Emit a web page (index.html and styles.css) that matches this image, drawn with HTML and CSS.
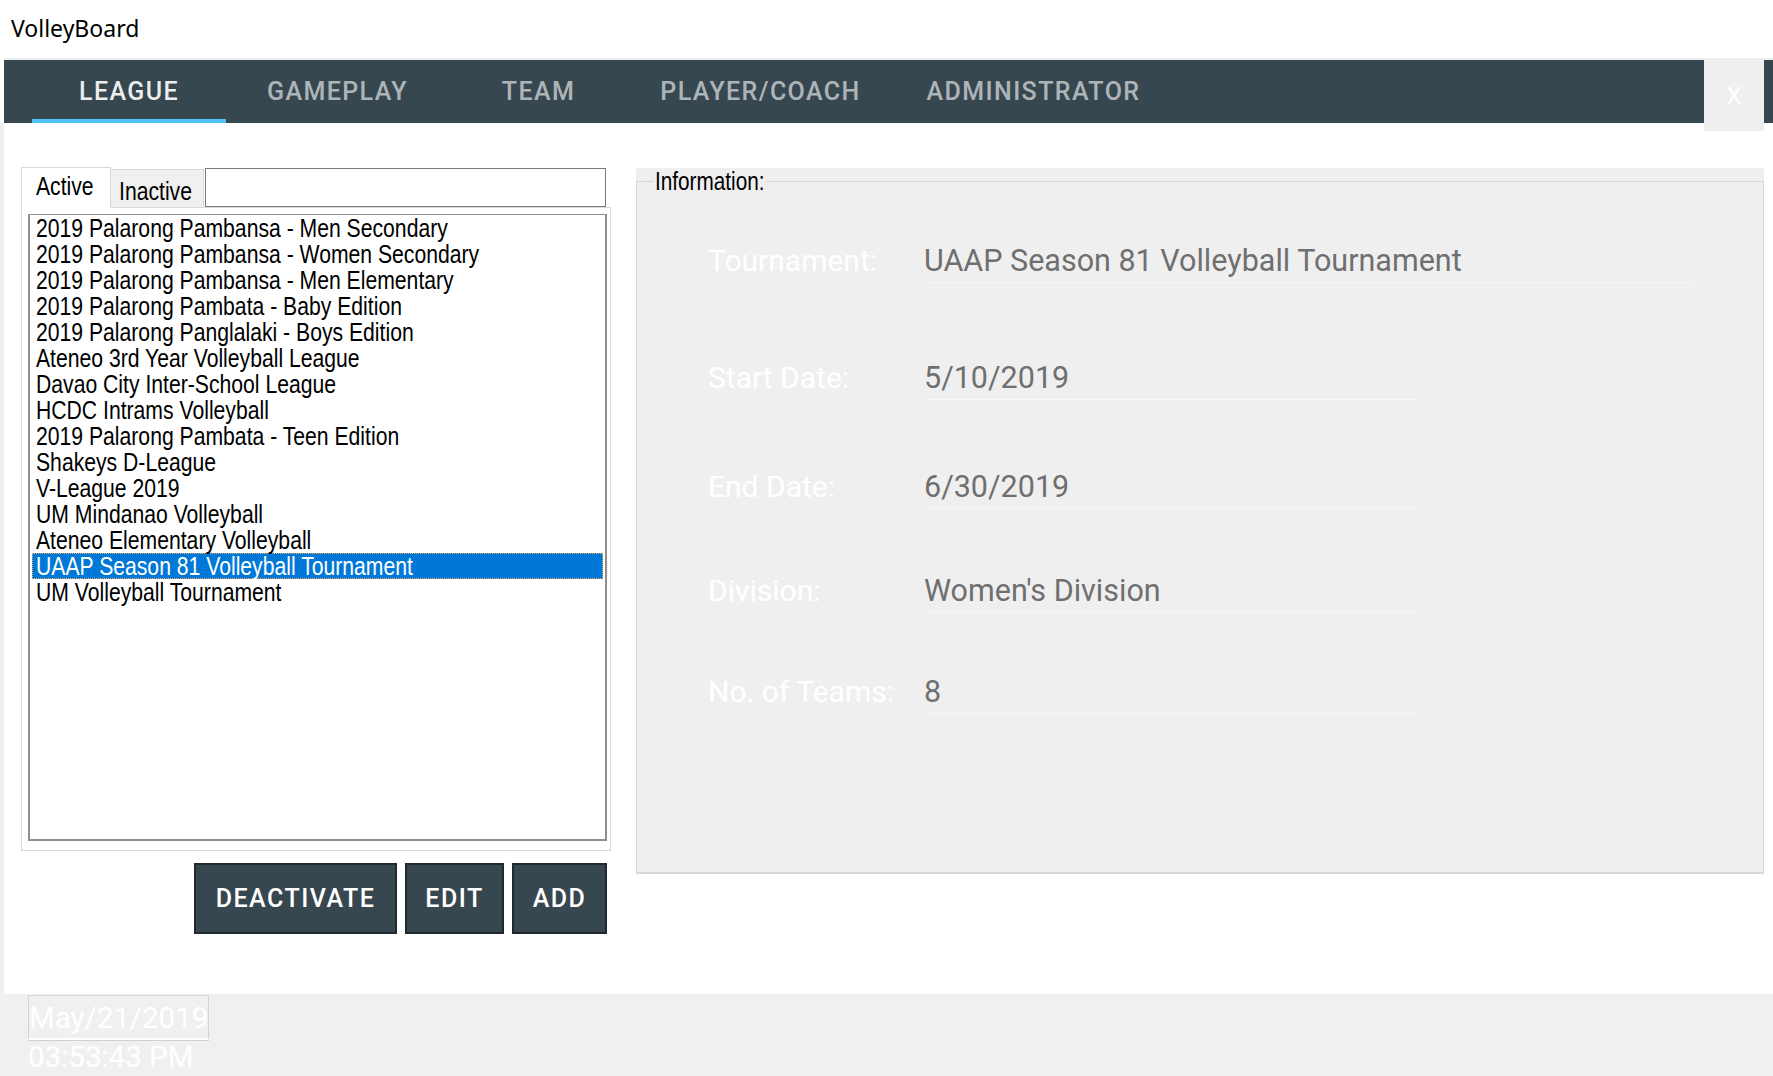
FILE: index.html
```html
<!DOCTYPE html>
<html lang="en">
<head>
<meta charset="utf-8">
<title>VolleyBoard</title>
<link rel="stylesheet" href="styles.css">
</head>
<body>
<div class="app">
  <header class="titlebar">VolleyBoard</header>
  <nav class="nav">
    <a class="tab tab-league active">LEAGUE</a>
    <a class="tab tab-gameplay">GAMEPLAY</a>
    <a class="tab tab-team">TEAM</a>
    <a class="tab tab-player">PLAYER/COACH</a>
    <a class="tab tab-admin">ADMINISTRATOR</a>
    <button class="close">X</button>
  </nav>
  <div class="shell">
    <main class="main">
      <section class="left">
        <div class="tabstrip">
          <div class="wtab selected"><span class="narrow">Active</span></div>
          <div class="wtab"><span class="narrow">Inactive</span></div>
          <input class="search" type="text" aria-label="Search">
        </div>
        <div class="tabpage">
          <ul class="listbox">
            <li><span class="narrow">2019 Palarong Pambansa - Men Secondary</span></li>
            <li><span class="narrow">2019 Palarong Pambansa - Women Secondary</span></li>
            <li><span class="narrow">2019 Palarong Pambansa - Men Elementary</span></li>
            <li><span class="narrow">2019 Palarong Pambata - Baby Edition</span></li>
            <li><span class="narrow">2019 Palarong Panglalaki - Boys Edition</span></li>
            <li><span class="narrow">Ateneo 3rd Year Volleyball League</span></li>
            <li><span class="narrow">Davao City Inter-School League</span></li>
            <li><span class="narrow">HCDC Intrams Volleyball</span></li>
            <li><span class="narrow">2019 Palarong Pambata - Teen Edition</span></li>
            <li><span class="narrow">Shakeys D-League</span></li>
            <li><span class="narrow">V-League 2019</span></li>
            <li><span class="narrow">UM Mindanao Volleyball</span></li>
            <li><span class="narrow">Ateneo Elementary Volleyball</span></li>
            <li class="selected"><span class="narrow">UAAP Season 81 Volleyball Tournament</span></li>
            <li><span class="narrow">UM Volleyball Tournament</span></li>
          </ul>
        </div>
        <div class="actions">
          <button class="btn btn-deactivate">DEACTIVATE</button>
          <button class="btn btn-edit">EDIT</button>
          <button class="btn btn-add">ADD</button>
        </div>
      </section>
      <section class="info">
        <fieldset class="group">
          <legend><span class="narrow">Information:</span></legend>
          <div class="rows">
            <div class="row"><span class="label">Tournament:</span><span class="field wide">UAAP Season 81 Volleyball Tournament</span></div>
            <div class="row"><span class="label">Start Date:</span><span class="field">5/10/2019</span></div>
            <div class="row"><span class="label">End Date:</span><span class="field">6/30/2019</span></div>
            <div class="row"><span class="label">Division:</span><span class="field">Women's Division</span></div>
            <div class="row"><span class="label">No. of Teams:</span><span class="field">8</span></div>
          </div>
        </fieldset>
      </section>
    </main>
    <footer class="footer">
      <div class="datebox">May/21/2019</div>
      <div class="time">03:53:43 PM</div>
    </footer>
  </div>
</div>
</body>
</html>
```
FILE: styles.css
```css
* { box-sizing: border-box; }
html, body { margin: 0; padding: 0; }
body {
  background: #ffffff;
  font-family: Roboto, "Liberation Sans", sans-serif;
  width: 1773px;
  height: 1076px;
  overflow: hidden;
}
.app { display: flex; flex-direction: column; height: 1076px; }

.narrow {
  display: inline-block;
  transform: scaleX(0.83);
  transform-origin: left center;
  white-space: nowrap;
}

.titlebar {
  height: 58px;
  padding-left: 11px;
  font-family: "Noto Sans", "Open Sans", sans-serif;
  font-size: 23px;
  line-height: 56px;
  color: #000;
}

.nav {
  position: relative;
  display: flex;
  height: 65px;
  margin-left: 4px;
  padding-left: 28px;
  border-top: 2px solid #e8edf0;
  background: #37474f;
}
.tab {
  display: flex;
  align-items: center;
  justify-content: center;
  font-size: 25px;
  font-weight: 500;
  letter-spacing: 1.4px;
  color: rgba(255, 255, 255, 0.62);
  cursor: pointer;
}
.tab.active {
  color: rgba(255, 255, 255, 0.92);
  box-shadow: inset 0 -4px 0 #4fc3f7;
}
.tab-league { width: 194px; }
.tab-gameplay { width: 223px; }
.tab-team { width: 179px; }
.tab-player { width: 265px; }
.tab-admin { width: 281px; }
.close {
  position: absolute;
  top: 0;
  right: 9px;
  width: 60px;
  height: 71px;
  border: 0;
  padding: 0;
  background: #efefef;
  color: #ffffff;
  font-family: Roboto, sans-serif;
  font-size: 24px;
}

.shell { flex: 1; display: flex; flex-direction: column; background: #f0f0f0; }
.main {
  height: 871px;
  margin-left: 4px;
  padding: 44px 0 0 17px;
  background: #ffffff;
  display: flex;
  align-items: flex-start;
}

.left { width: 590px; display: flex; flex-direction: column; }
.tabstrip { display: flex; align-items: flex-end; height: 40px; }
.wtab {
  font-family: "Liberation Sans", Arial, sans-serif;
  font-size: 25.5px;
  color: #000;
  overflow: hidden;
}
.wtab.selected {
  position: relative;
  z-index: 1;
  width: 90px;
  height: 41px;
  margin-bottom: -1px;
  padding-left: 14px;
  line-height: 36px;
  background: #ffffff;
  border: 1px solid #d9d9d9;
  border-bottom: 0;
}
.wtab:not(.selected) {
  width: 93px;
  height: 38px;
  padding: 2px 0 0 8px;
  line-height: 38px;
  background: #f0f0f0;
  border: 1px solid #d9d9d9;
  border-left: 0;
  border-bottom: 0;
}
.search {
  width: 401px;
  height: 39px;
  margin: 0 0 0 1px;
  border: 1px solid #7a7a7a;
  background: #fff;
  outline: none;
}
.tabpage {
  height: 644px;
  padding: 6px 3px 9px 6px;
  border: 1px solid #d9d9d9;
  background: #fff;
  display: flex;
}
.listbox {
  flex: 1;
  margin: 0;
  padding: 0 2px;
  list-style: none;
  border: 2px solid #8f8f8f;
  border-top-width: 1px;
  font-family: "Liberation Sans", Arial, sans-serif;
  font-size: 25.5px;
  line-height: 26px;
  color: #000;
}
.listbox li { padding-left: 4px; height: 26px; white-space: nowrap; }
.listbox li.selected {
  background: #0078d7;
  color: #ffffff;
  outline: 1px dotted #f3a85a;
  outline-offset: -1px;
}

.actions {
  display: flex;
  justify-content: flex-end;
  gap: 8px;
  margin-top: 12px;
  padding-right: 4px;
}
.btn {
  height: 71px;
  padding: 0;
  border: 2px solid #1f292e;
  background: #37474f;
  color: #ffffff;
  font-family: Roboto, sans-serif;
  font-size: 25px;
  font-weight: 500;
  letter-spacing: 1.5px;
}
.btn-deactivate { width: 203px; }
.btn-edit { width: 99px; }
.btn-add { width: 95px; }

.info {
  width: 1128px;
  height: 706px;
  margin: 1px 0 0 25px;
  display: flex;
  background: #efefef;
  border-bottom: 2px solid #d8d8d8;
}
.group {
  flex: 1;
  min-width: 0;
  margin: 0;
  padding: 0;
  border: 1px solid #d5d5d5;
  border-bottom: 0;
}
.group legend {
  width: 112px;
  margin-left: 17px;
  padding: 0 1px;
  font-family: "Liberation Sans", Arial, sans-serif;
  font-size: 25px;
  line-height: 27px;
  color: #000;
}
.rows {
  display: grid;
  grid-template-columns: 216px 1fr;
  grid-template-rows: 117px 109px 104px 101px 40px;
  padding: 49px 0 0 71px;
}
.row { display: contents; }
.label, .field {
  font-family: Roboto, sans-serif;
  line-height: 34px;
  white-space: nowrap;
}
.label { color: #ffffff; font-size: 30px; }
.field {
  align-self: start;
  width: 496px;
  padding-bottom: 4px;
  font-size: 30.5px;
  color: #6f6f6f;
  border-bottom: 1px solid #f7f7f7;
}
.field.wide { width: 769px; }

.footer { flex: 1; padding: 1px 0 0 28px; }
.datebox {
  width: 181px;
  padding-top: 3px;
  border: 1px solid #d4d4d4;
  border-bottom: 2px solid #ffffff;
  box-shadow: 0 1px 0 #d0d0d0;
  font-family: Roboto, sans-serif;
  font-size: 29.5px;
  line-height: 39px;
  color: #ffffff;
}
.time {
  font-family: Roboto, sans-serif;
  font-size: 29.5px;
  line-height: 34px;
  color: #ffffff;
}
```
